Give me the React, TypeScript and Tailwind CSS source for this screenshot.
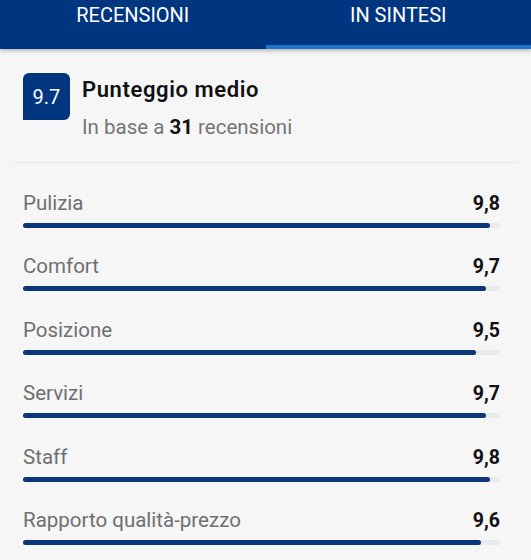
import type { ReactNode } from 'react'

type Score = {
  label: string
  value: number
}

const scores: Score[] = [
  { label: 'Pulizia', value: 9.8 },
  { label: 'Comfort', value: 9.7 },
  { label: 'Posizione', value: 9.5 },
  { label: 'Servizi', value: 9.7 },
  { label: 'Staff', value: 9.8 },
  { label: 'Rapporto qualità-prezzo', value: 9.6 },
]

const Tab = ({ active, children }: { active?: boolean; children: ReactNode }) => {
  return (
    <div
      className={`flex-1 h-[49px] flex justify-center border-b-4 ${
        active ? 'border-[#1f74d0]' : 'border-transparent'
      }`}
    >
      <span className="pt-px text-[20px] leading-7 text-white">{children}</span>
    </div>
  )
}

export default function App() {
  return (
    <div
      className="w-[531px] h-[560px] overflow-hidden bg-[#f6f6f6]"
      style={{ fontFamily: 'Roboto, "Noto Sans", sans-serif' }}
    >
      {/* Tabs */}
      <div className="relative z-10 flex bg-[#003580] shadow-[0_2px_4px_rgba(0,0,0,0.25)]">
        <Tab>RECENSIONI</Tab>
        <Tab active>IN SINTESI</Tab>
      </div>

      {/* Average score */}
      <div className="flex gap-3 px-[23px] pt-6">
        <div className="w-[47px] h-[47px] shrink-0 flex items-center justify-center bg-[#003580] rounded-t-[6px] rounded-br-[6px] text-[20px] text-white">
          9.7
        </div>
        <div className="pt-[5px]">
          <div className="text-[22px] leading-6 font-semibold tracking-[0.6px] text-[#111]">
            Punteggio medio
          </div>
          <div className="mt-[13px] text-[20.5px] leading-6 text-[#757575]">
            In base a <span className="font-bold text-[#111]">31</span>{' '}
            recensioni
          </div>
        </div>
      </div>

      <div className="mx-3 mt-[23px] h-px bg-[#e8e8e8]" />

      {/* Category scores */}
      <div className="pl-[23px] pr-[31px] pt-[28px]">
        {scores.map((s) => (
          <div key={s.label} className="h-[63.4px]">
            <div className="flex justify-between items-baseline leading-6">
              <span className="text-[20.5px] text-[#6f6f6f]">{s.label}</span>
              <span className="text-[19.5px] font-bold text-[#111]">
                {s.value.toFixed(1).replace('.', ',')}
              </span>
            </div>
            <div className="mt-[7px] h-[5px] rounded-full bg-[#e9e9e9]">
              <div
                className="h-full rounded-full bg-[#0b3678]"
                style={{ width: `${s.value * 10}%` }}
              />
            </div>
          </div>
        ))}
      </div>
    </div>
  )
}
